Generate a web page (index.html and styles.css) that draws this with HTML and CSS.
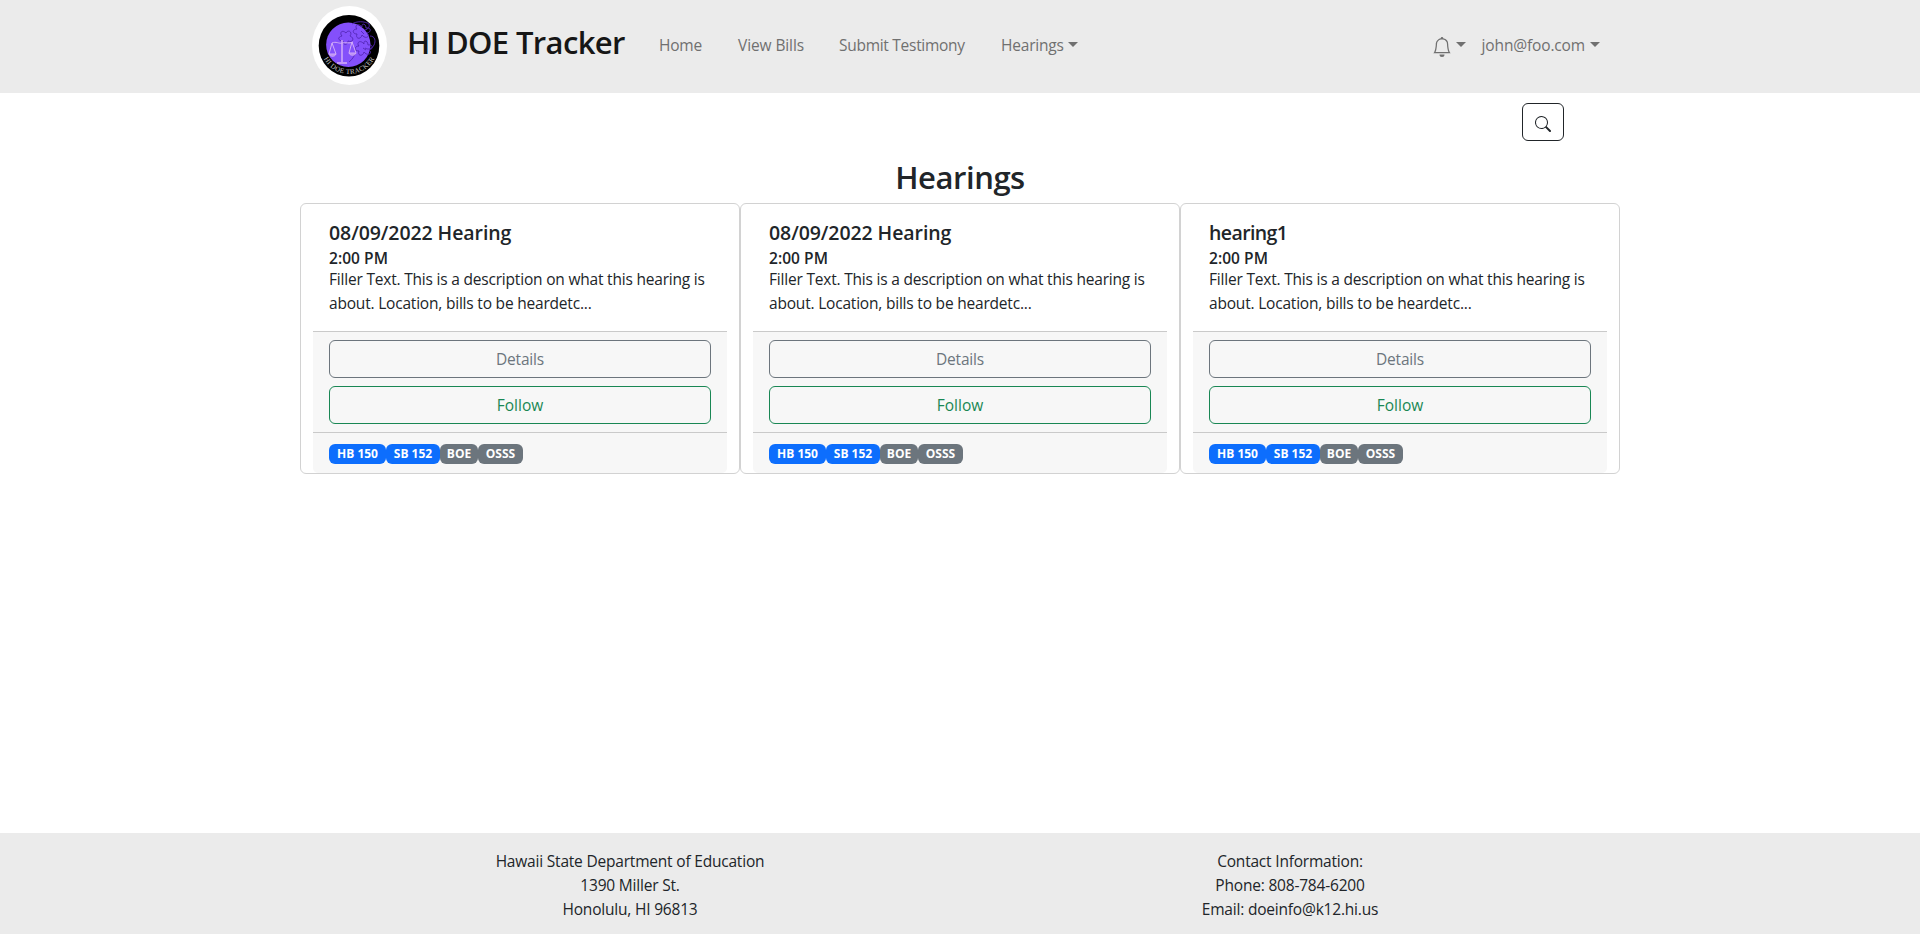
FILE: index.html
```html
<!DOCTYPE html>
<html lang="en">
<head>
<meta charset="utf-8">
<title>HI DOE Tracker</title>
<link rel="stylesheet" href="styles.css">
</head>
<body>
<header class="navbar">
  <div class="container nav-inner">
    <svg class="logo" viewBox="0 0 76 80" width="76" height="80">
      <defs><path id="ring" d="M8.7 39.5 A28.5 28.5 0 0 0 65.7 39.5"/></defs>
      <ellipse cx="37.5" cy="39.5" rx="37.5" ry="39.5" fill="#fff"/>
      <ellipse cx="37" cy="39.7" rx="30.3" ry="30.8" fill="#000"/>
      <circle cx="36.3" cy="38.7" r="22.2" fill="#8450fb"/>
      <g fill="none" stroke="#5427b5" stroke-width=".9">
        <path d="M40 18c4-3 13-3 17 0 1 3-1 5-4 6M58 30c5 0 6 5 4 9s-6 5-9 3M44 44c-1 5-3 9-7 12"/>
        <path d="M50 21c-4-5-8-1-5 2-5 0-5 5 0 5-2 5 4 6 5 1 4 5 9 1 5-2 5-1 4-6-1-5 0-5-5-5-4-1zM49 25l3 3"/>
        <path d="M52 38c-4-5-8-1-5 2-5 0-5 5 0 5-2 5 4 6 5 1 4 5 9 1 5-2 5-1 4-6-1-5 0-5-5-5-4-1zM51 42l3 2"/>
        <path d="M34 27c-4-4-7 0-4 3-5 1-4 5 1 5 0 5 5 4 5 0 5 2 7-3 2-5 3-4-2-7-4-3z"/>
      </g>
      <g fill="none" stroke="#d3adf8" stroke-width="1">
        <path d="M30 34v22" stroke-width="1.5"/>
        <path d="M20 37c4-2 7 1 10 0s7 1 11-1M20 37l-3 11M20 37l4 11M40 36l-3 11M40 36l4 11"/>
        <path d="M25 57h10" stroke-width="1.6"/>
        <path d="M17 48h7c-1 3-6 3-7 0zM37 47h7c-1 3-6 3-7 0z" fill="#b68af4"/>
      </g>
      <text class="logo-text"><textPath href="#ring" startOffset="50%" text-anchor="middle" textLength="62">HI DOE TRACKER</textPath></text>
    </svg>
    <h2 class="brand">HI DOE Tracker</h2>
    <nav class="links">
      <a class="l-home">Home</a>
      <a class="l-bills">View Bills</a>
      <a class="l-submit">Submit Testimony</a>
      <a class="l-hear">Hearings<i class="caret"></i></a>
    </nav>
    <div class="user">
      <span class="bell"><svg width="20" height="20" viewBox="0 0 16 16" fill="currentColor"><path d="M8 16a2 2 0 0 0 2-2H6a2 2 0 0 0 2 2zM8 1.918l-.797.161A4.002 4.002 0 0 0 4 6c0 .628-.134 2.197-.459 3.742-.16.767-.376 1.566-.663 2.258h10.244c-.287-.692-.502-1.49-.663-2.258C12.134 8.197 12 6.628 12 6a4.002 4.002 0 0 0-3.203-3.92L8 1.917zM14.22 12c.223.447.481.801.78 1H1c.299-.199.557-.553.78-1C2.68 10.2 3 6.88 3 6c0-2.42 1.72-4.44 4.005-4.901a1 1 0 1 1 1.99 0A5.002 5.002 0 0 1 13 6c0 .88.32 4.2 1.22 6z"/></svg><i class="caret"></i></span>
      <span class="email">john@foo.com<i class="caret"></i></span>
    </div>
  </div>
</header>
<main class="container">
  <div class="search-row">
    <button class="search" aria-label="Search"><svg width="16" height="16" viewBox="0 0 16 16" fill="currentColor"><path d="M11.742 10.344a6.5 6.5 0 1 0-1.397 1.398h-.001c.03.04.062.078.098.115l3.85 3.85a1 1 0 0 0 1.415-1.414l-3.85-3.85a1.007 1.007 0 0 0-.115-.1zM12 6.5a5.5 5.5 0 1 1-11 0 5.5 5.5 0 0 1 11 0z"/></svg></button>
  </div>
  <h2 class="heading">Hearings</h2>
  <div class="cards">
    <article class="card">
      <div class="card-body">
        <h5 class="card-title">08/09/2022 Hearing</h5>
        <h6 class="card-time">2:00 PM</h6>
        <p class="card-text">Filler Text. This is a description on what this hearing is<br>about. Location, bills to be heardetc...</p>
      </div>
      <div class="actions"><button class="btn details">Details</button><button class="btn follow">Follow</button></div>
      <div class="tags"><span class="badge hb">HB 150</span><span class="badge sb">SB 152</span><span class="badge boe">BOE</span><span class="badge osss">OSSS</span></div>
    </article>
    <article class="card">
      <div class="card-body">
        <h5 class="card-title">08/09/2022 Hearing</h5>
        <h6 class="card-time">2:00 PM</h6>
        <p class="card-text">Filler Text. This is a description on what this hearing is<br>about. Location, bills to be heardetc...</p>
      </div>
      <div class="actions"><button class="btn details">Details</button><button class="btn follow">Follow</button></div>
      <div class="tags"><span class="badge hb">HB 150</span><span class="badge sb">SB 152</span><span class="badge boe">BOE</span><span class="badge osss">OSSS</span></div>
    </article>
    <article class="card">
      <div class="card-body">
        <h5 class="card-title short">hearing1</h5>
        <h6 class="card-time">2:00 PM</h6>
        <p class="card-text">Filler Text. This is a description on what this hearing is<br>about. Location, bills to be heardetc...</p>
      </div>
      <div class="actions"><button class="btn details">Details</button><button class="btn follow">Follow</button></div>
      <div class="tags"><span class="badge hb">HB 150</span><span class="badge sb">SB 152</span><span class="badge boe">BOE</span><span class="badge osss">OSSS</span></div>
    </article>
  </div>
</main>
<footer class="footer">
  <div class="container footer-cols">
    <div>Hawaii State Department of Education<br>1390 Miller St.<br>Honolulu, HI 96813</div>
    <div>Contact Information:<br>Phone: 808-784-6200<br>Email: doeinfo@k12.hi.us</div>
  </div>
</footer>
</body>
</html>
```
FILE: styles.css
```css
* { box-sizing: border-box; }
body {
  margin: 0;
  height: 934px;
  display: flex;
  flex-direction: column;
  font: 400 15.5px/24px "Open Sans", "Noto Sans", sans-serif;
  letter-spacing: -0.2px;
  color: #212529;
  background: #fff;
}
h2, h5, h6, p { margin: 0; }
.container { width: 1320px; margin: 0 auto; }
.navbar { height: 93px; background: #ebebeb; }
.nav-inner { display: flex; padding-left: 12px; height: 93px; }
.logo { margin-top: 6px; flex: none; }
.logo-text { font: 7px "Liberation Serif", serif; letter-spacing: 0; fill: #c4c4c4; }
.brand {
  width: 231px;
  margin: 23px 0 0 19px;
  font-size: 31px;
  line-height: 38px;
  font-weight: 600;
  letter-spacing: -0.62px;
  color: #161616;
  white-space: nowrap;
}
.links { display: flex; margin-top: 33px; color: #707070; white-space: nowrap; }
.links a { flex: none; }
.l-home { width: 79px; margin-left: 21px; }
.l-bills { width: 101px; letter-spacing: -0.1px; }
.l-submit { width: 162px; letter-spacing: -0.28px; }
.caret {
  display: inline-block;
  margin-left: 5px;
  vertical-align: 4px;
  border-top: 5px solid currentColor;
  border-left: 5px solid transparent;
  border-right: 5px solid transparent;
}
.l-hear .caret { margin-left: 4px; }
.user { display: flex; margin: 33px 20px 0 auto; color: #707070; }
.bell { display: flex; width: 50px; }
.bell svg { margin-top: 4px; }
.bell .caret { margin: 9px 0 0 4px; height: 5px; }
.email { letter-spacing: -0.15px; }
.search-row { display: flex; justify-content: flex-end; padding: 10px 56px 0 0; }
.search {
  width: 42px;
  height: 38px;
  padding: 4px 0 0;
  border: 1px solid #212529;
  border-radius: 6px;
  background: #fff;
  color: #212529;
  display: flex;
  align-items: center;
  justify-content: center;
}
main { flex: 1; }
.heading {
  margin-top: 17px;
  height: 45px;
  font-size: 31px;
  line-height: 38px;
  font-weight: 600;
  letter-spacing: -0.45px;
  text-align: center;
}
.cards { display: flex; }
.card {
  width: 440px;
  height: 271px;
  padding: 0 12px;
  border: 1px solid #d2d2d2;
  border-radius: 6px;
}
.card-body { height: 127px; padding: 16px; white-space: nowrap; }
.card-title {
  height: 24px;
  font-size: 19.5px;
  line-height: 25px;
  font-weight: 600;
  letter-spacing: -0.08px;
}
.card-title.short { letter-spacing: -0.6px; }
.card-time {
  height: 19px;
  margin-top: 4px;
  font-size: 15.5px;
  line-height: 20px;
  font-weight: 600;
  letter-spacing: 0.05px;
}
.actions {
  display: flex;
  flex-direction: column;
  gap: 8px;
  padding: 8px 16px;
  border-top: 1px solid #cacaca;
  background: #f7f7f7;
}
.btn {
  height: 38px;
  padding: 0;
  font: inherit;
  letter-spacing: inherit;
  background: none;
  border: 1px solid;
  border-radius: 6px;
}
.details { color: #6c757d; }
.follow { color: #198754; letter-spacing: 0; }
.tags {
  display: flex;
  height: 41px;
  padding: 11px 16px 0;
  border-top: 1px solid #cacaca;
  border-radius: 0 0 5px 5px;
  background: #f7f7f7;
}
.badge {
  height: 20px;
  border-radius: 6px;
  color: #fff;
  background: #6c757d;
  font-size: 12px;
  line-height: 20px;
  font-weight: 700;
  letter-spacing: 0;
  text-align: center;
  white-space: nowrap;
}
.hb { width: 57px; background: #0d6efd; }
.sb { width: 54px; background: #0d6efd; }
.boe { width: 38px; }
.osss { width: 45px; }
.footer { height: 101px; padding-top: 16px; background: #ebebeb; text-align: center; }
.footer-cols { display: grid; grid-template-columns: 1fr 1fr; }
```
